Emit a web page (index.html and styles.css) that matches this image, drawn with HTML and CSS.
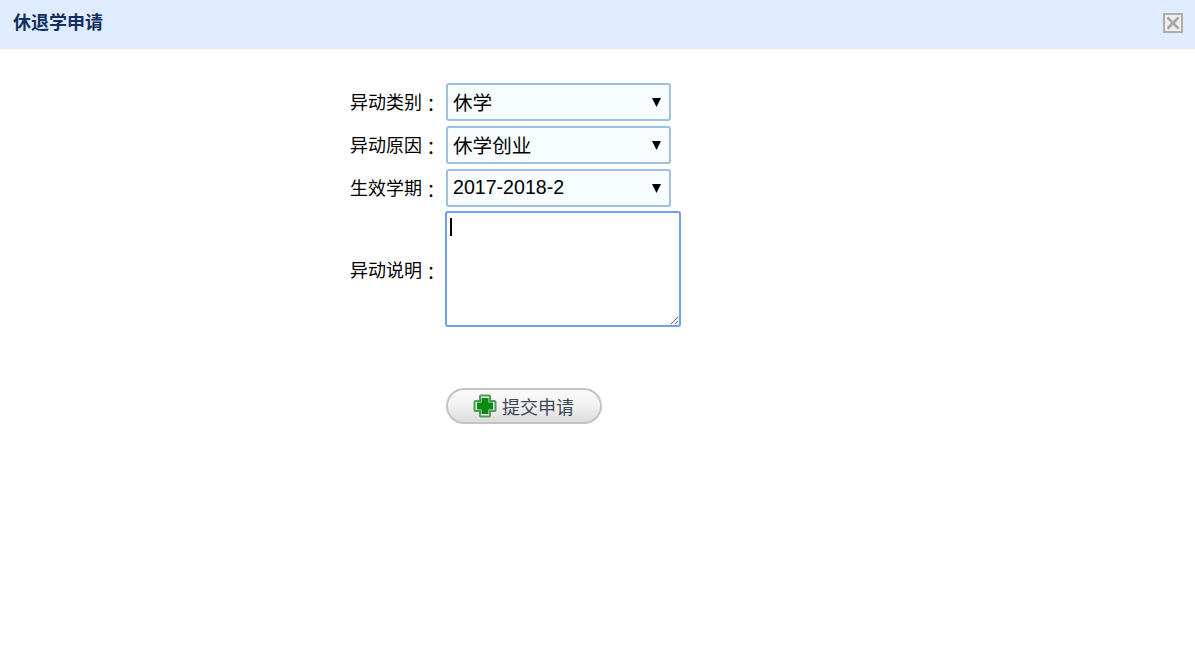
FILE: index.html
```html
<!DOCTYPE html>
<html lang="zh-CN">
<head>
<meta charset="utf-8">
<title>休退学申请</title>
<link rel="stylesheet" href="styles.css">
</head>
<body>
<header class="titlebar">
  <h1 class="title">休退学申请</h1>
  <button class="close" type="button" aria-label="关闭">
    <svg width="16" height="16" viewBox="0 0 16 16"><path d="M2.500 2.500 13.500 13.500M13.500 2.500 2.500 13.500" fill="none" stroke="#a6a6a6" stroke-width="2.600"/></svg>
  </button>
</header>
<form class="form">
  <label class="label">异动类别<span class="colon" lang="zh-Hant">：</span></label>
  <div class="select-wrap">
    <select class="select"><option>休学</option></select>
    <svg class="arrow" width="9" height="9" viewBox="0 0 9 9"><path d="M0 0H9L4.500 9Z"/></svg>
  </div>
  <label class="label">异动原因<span class="colon" lang="zh-Hant">：</span></label>
  <div class="select-wrap">
    <select class="select"><option>休学创业</option></select>
    <svg class="arrow" width="9" height="9" viewBox="0 0 9 9"><path d="M0 0H9L4.500 9Z"/></svg>
  </div>
  <label class="label">生效学期<span class="colon" lang="zh-Hant">：</span></label>
  <div class="select-wrap">
    <select class="select select-num"><option>2017-2018-2</option></select>
    <svg class="arrow" width="9" height="9" viewBox="0 0 9 9"><path d="M0 0H9L4.500 9Z"/></svg>
  </div>
  <label class="label">异动说明<span class="colon" lang="zh-Hant">：</span></label>
  <div class="area-wrap">
    <textarea class="area"></textarea>
    <span class="caret"></span>
  </div>
  <div class="actions">
    <button class="submit" type="button">
      <svg class="plus" width="24" height="24" viewBox="0 0 24 24">
        <path d="M8 1.500H16Q17 1.500 17 2.500V7H21.500Q22.500 7 22.500 8V16Q22.500 17 21.500 17H17V21.500Q17 22.500 16 22.500H8Q7 22.500 7 21.500V17H2.500Q1.500 17 1.500 16V8Q1.500 7 2.500 7H7V2.500Q7 1.500 8 1.500Z" fill="#e2f2e2" stroke="#4e9c5c" stroke-width="2"/>
        <path d="M8.500 4H15.500V8.500H20V15.500H15.500V20H8.500V15.500H4V8.500H8.500Z" fill="#0b8a12"/>
      </svg>
      <span>提交申请</span>
    </button>
  </div>
</form>
</body>
</html>
```
FILE: styles.css
```css
html, body {
  margin: 0;
  padding: 0;
  background: #fff;
}
body {
  height: 672px;
  overflow: hidden;
  font-family: "Liberation Sans", "Noto Sans CJK SC", sans-serif;
  color: #000;
}
.titlebar {
  height: 49px;
  background: #dfebff;
  display: flex;
  align-items: center;
  justify-content: space-between;
  padding: 0 12px 4px 13px;
  box-sizing: border-box;
}
.title {
  margin: 0;
  font-size: 18px;
  font-weight: bold;
  color: #12305f;
  line-height: 24px;
}
.close {
  width: 20px;
  height: 20px;
  padding: 0;
  border: 2px solid #aeaeae;
  background: #eeeeee;
  display: flex;
  align-items: center;
  justify-content: center;
  box-sizing: border-box;
}
.close svg {
  flex: none;
}
.form {
  display: grid;
  grid-template-columns: 90px auto;
  justify-content: start;
  align-items: center;
  column-gap: 6px;
  row-gap: 5px;
  padding: 34px 0 0 350px;
}
.label {
  font-size: 18px;
  line-height: 24px;
  padding-top: 2px;
  white-space: nowrap;
}
.colon {
  font-family: "Noto Sans CJK TC", sans-serif;
  line-height: 1;
  vertical-align: -3px;
}
.select-wrap {
  position: relative;
  width: 225px;
  height: 38px;
}
.select {
  appearance: none;
  display: block;
  width: 100%;
  height: 100%;
  box-sizing: border-box;
  border: 2px solid #9cc0e0;
  border-radius: 3px;
  background: #f8fdff;
  padding: 2px 0 0 5px;
  font: 19.6px "Liberation Sans", "Noto Sans CJK SC", sans-serif;
  color: #000;
}
.select-num {
  padding: 0 0 2px 5px;
}
.arrow {
  position: absolute;
  left: 206px;
  top: 15px;
}
.area-wrap {
  position: relative;
  width: 236px;
  height: 116px;
  margin: -1px 0 0 -1px;
}
.area {
  display: block;
  width: 100%;
  height: 100%;
  box-sizing: border-box;
  border: 2px solid #6f9fee;
  border-radius: 3px;
  background: #fff;
  margin: 0;
  padding: 0;
  outline: none;
}
.caret {
  position: absolute;
  left: 5px;
  top: 7px;
  width: 2px;
  height: 18px;
  background: #000;
}
.actions {
  grid-column: 2;
  padding-top: 56px;
}
.submit {
  width: 156px;
  height: 36px;
  box-sizing: border-box;
  border: 2px solid #c4c4c4;
  border-radius: 18px;
  background: linear-gradient(#fafafa 0%, #f2f2f2 45%, #dcdcdc 100%);
  display: flex;
  align-items: center;
  padding: 0 0 0 25px;
  gap: 5px;
  font: 18px "Liberation Sans", "Noto Sans CJK SC", sans-serif;
  color: #3a4654;
}
.plus {
  flex: none;
}
```
